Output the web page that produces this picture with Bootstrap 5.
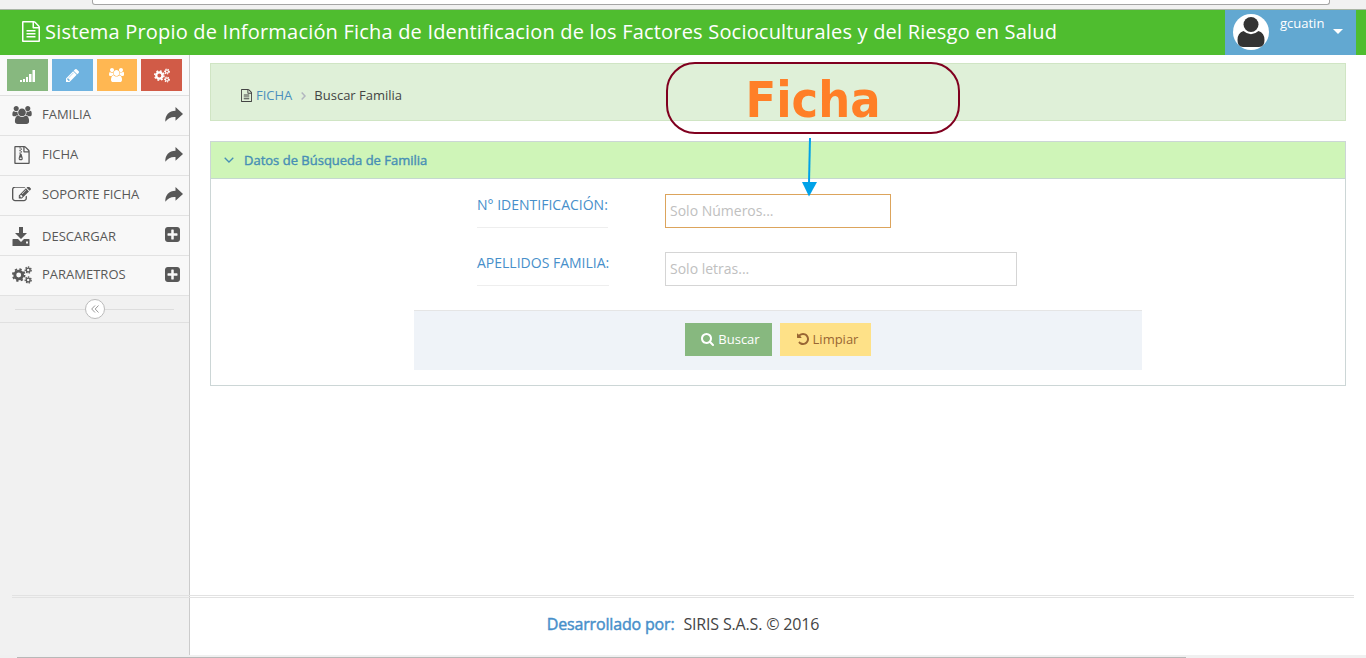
<!DOCTYPE html>
<html lang="es">
<head>
<meta charset="utf-8">
<meta name="viewport" content="width=device-width, initial-scale=1">
<title>Buscar Familia</title>
<link href="https://cdn.jsdelivr.net/npm/bootstrap@5.3.0/dist/css/bootstrap.min.css" rel="stylesheet">
<style>
body{font-family:"Open Sans",sans-serif;font-size:13px;line-height:20px;color:#444;background:#fff;height:658px;overflow:hidden}
svg{fill:currentColor;flex:none;display:block}
.chrome{height:10px;background:#f1f1f1;border-bottom:1px solid #a9b5a5;padding:0 36px 0 92px}
.chrome div{height:5px;background:#fff;border:1px solid #a5a5a5;border-top:0;border-radius:0 0 3px 3px}
.topbar{height:45px;background:#4fbd2f;padding:0 10px 0 22px}
.brand{color:#fff;font-size:20px;line-height:43px;gap:5px;white-space:nowrap;height:43px}
.brand span{letter-spacing:.193px}
.user{width:131px;background:#62a8d1;color:#fff;padding:4px 0 0 8px}
.avatar{width:36px;height:36px;background:#fff;color:#333}
.user span{margin:-1px 0 0 11px;height:20px;line-height:20px}
.main{height:600px}
.sidebar{width:190px;background:#f1f1f1;border-right:1px solid #ccc}
.shortcuts{height:41px;background:#fafafa;border-bottom:1px solid #e0e0e0;padding:4px 7px;gap:4px}
.shortcuts .btn{width:41px;height:32px;border:0;border-radius:0;color:#fff;padding:0}
.c1{background:#87b87f!important}.c2{background:#6fb3e0!important}.c3{background:#ffb752!important}.c4{background:#d15b47!important}
.item{height:40px;background:#f8f8f8;border-bottom:1px solid #e2e2e2;color:#585858;padding:0 6px 2px 12px}
.item .ico{width:30px}
.item .flex-grow-1{padding-bottom:2px}
.item .flex-grow-1.low{padding:2px 0 0}
.item .end{width:18px}
.collapser{height:27px;border-bottom:1px solid #e0e0e0;padding:0 15px}
.collapser i{height:1px;background:#ddd}
.collapser b{width:20px;height:20px;border:1px solid #bbb;background:#fff;color:#999;border-radius:50%}
.content{padding:8px 20px 0}
.crumbs{height:58px;background:#dff0d8;border:1px solid #d0e5c4;padding:6px 0 0 30px}
.blue{color:#4c8fbd}
.widget{margin-top:20px;height:245px;border:1px solid #ccd6d6}
.widget-head{height:37px;background:#cff5b8;border-bottom:1px solid #c5d8d0;padding-left:13px;color:#478fb5;-webkit-text-stroke:.4px #478fb5}
.fields{padding-left:266px}
.field-label{width:188px;font-size:14px;color:#478fca}
.field-label span{display:inline-block;height:34px;line-height:22px;border-bottom:1px solid #eee;white-space:nowrap}
.field{height:34px;padding:0 4px 2px;font-size:14px;border:1px solid #d5d5d5;border-radius:0;box-shadow:none}
.field::placeholder{color:#c0c0c0}
.actions{margin:24px 0 0 203px;width:728px;height:60px;background:#eff3f8;border-top:1px solid #e5e5e5;gap:8px;padding-bottom:2px}
.actions .btn{height:33px;border:0;border-radius:0;font-size:13px;line-height:20px;padding:0 0 1px 4px}
.footer-line{margin:0 12px;height:3px;border:solid #e2e2e2;border-width:1px 0;position:relative}
.foot{font-size:16px;letter-spacing:-.17px}
.foot .blue{-webkit-text-stroke:.45px #478fca;color:#478fca}
.note{left:666px;top:62px;width:294px;height:72px;border:2px solid #80001f;border-radius:29px;color:#ff7f27;font:bold 50px/72px "DejaVu Sans Condensed","DejaVu Sans",sans-serif;font-stretch:condensed;text-align:center}
.arrow{left:800px;top:138px}
.foot-wrap{left:0;right:0;top:595px}
.scroll{left:0;right:0;bottom:0;height:3px;background:#f0f0f0}
.scroll div{height:1px;margin:2px 180px 0 17px;background:#b8b8b8}
</style>
</head>
<body>
<svg width="0" height="0" class="position-absolute"><defs>
<symbol id="file" viewBox="0 0 1536 1792"><path d="M1468 380q28 28 48 76t20 88v1152q0 40-28 68t-68 28h-1344q-40 0-68-28t-28-68v-1600q0-40 28-68t68-28h896q40 0 88 20t76 48zm-444-244v376h376q-10-29-22-41l-313-313q-12-12-41-22zm384 1528v-1024h-416q-40 0-68-28t-28-68v-416h-768v1536h1280zm-1024-864q0-14 9-23t23-9h704q14 0 23 9t9 23v64q0 14-9 23t-23 9h-704q-14 0-23-9t-9-23v-64zm736 224q14 0 23 9t9 23v64q0 14-9 23t-23 9h-704q-14 0-23-9t-9-23v-64q0-14 9-23t23-9h704zm0 256q14 0 23 9t9 23v64q0 14-9 23t-23 9h-704q-14 0-23-9t-9-23v-64q0-14 9-23t23-9h704z"/></symbol>
<symbol id="zip" viewBox="0 0 1536 1792"><path d="M1468 380q28 28 48 76t20 88v1152q0 40-28 68t-68 28h-1344q-40 0-68-28t-28-68v-1600q0-40 28-68t68-28h896q40 0 88 20t76 48zm-444-244v376h376q-10-29-22-41l-313-313q-12-12-41-22zm384 1528v-1024h-416q-40 0-68-28t-28-68v-416h-768v1536h1280z"/><path d="M512 128h128v128H512zM640 256h128v128H640zM512 384h128v128H512zM640 512h128v128H640zM512 640h128v128H512z"/><path fill-rule="evenodd" d="M560 768h160l120 420q40 230-200 230t-200-230zM640 1150c-150 0-150 150 0 150s150-150 0-150z"/></symbol>
<symbol id="share" viewBox="0 0 18 16"><path d="M10.500 0L18 7l-7.500 6.700V10C6 9.700 3 11 .3 14.800C0 8 4 3.900 10.500 3.700z"/></symbol>
<symbol id="plus" viewBox="128 128 1536 1536"><path d="M1408 960v-128q0-26-19-45t-45-19h-320v-320q0-26-19-45t-45-19h-128q-26 0-45 19t-19 45v320h-320q-26 0-45 19t-19 45v128q0 26 19 45t45 19h320v320q0 26 19 45t45 19h128q26 0 45-19t19-45v-320h320q26 0 45-19t19-45zm256-544v960q0 119-84.500 203.500t-203.500 84.500h-960q-119 0-203.500-84.500t-84.500-203.500v-960q0-119 84.500-203.500t203.500-84.500h960q119 0 203.500 84.500t84.500 203.500z"/></symbol>
<symbol id="undo" viewBox="128 128 1536 1536"><path d="M1664 896q0 156-61 298t-164 245-245 164-298 61q-172 0-327-72.500t-264-204.500q-7-10-6.500-22.500t8.500-20.500l137-138q10-9 25-9 16 2 23 12 73 95 179 147t225 52q104 0 198.500-40.500t163.500-109.500 109.500-163.500 40.500-198.500-40.500-198.500-109.500-163.500-163.500-109.500-198.500-40.500q-98 0-188 35.500t-160 101.500l137 138q31 30 14 69-17 40-59 40h-448q-26 0-45-19t-19-45v-448q0-42 40-59 39-17 69 14l130 129q107-101 244.500-156.500t284.500-55.500q156 0 298 61t245 164 164 245 61 298z"/></symbol>
<symbol id="search" viewBox="64 128 1664 1664"><path d="M1216 832q0-185-131.500-316.500t-316.500-131.500-316.500 131.500-131.500 316.500 131.500 316.500 316.500 131.500 316.500-131.500 131.500-316.500zm512 832q0 52-38 90t-90 38q-54 0-90-38l-343-342q-179 124-399 124-143 0-273.500-55.500t-225-150-150-225-55.500-273.500 55.500-273.500 150-225 225-150 273.500-55.500 273.500 55.500 225 150 150 225 55.500 273.500q0 220-124 399l343 343q37 37 37 90z"/></symbol>
<symbol id="pencil" viewBox="128 149 1515 1515"><path d="M491 1536l91-91-235-235-91 91v107h128v128h107zm523-928q0-22-22-22-10 0-17 7l-542 542q-7 7-7 17 0 22 22 22 10 0 17-7l542-542q7-7 7-17zm-54-192l416 416-832 832h-416v-416zm683 96q0 53-37 90l-166 166-416-416 166-165q36-38 90-38 53 0 91 38l235 234q37 39 37 91z"/></symbol>
<symbol id="users" viewBox="64 0 1920 1792"><path d="M657 896q-162 5-265 128h-134q-82 0-138-40.500t-56-118.500q0-353 124-353 6 0 43.500 21t97.500 42.500 119 21.500q67 0 133-23-5 37-5 66 0 159 93 293zm1071 637q0 120-73 189.500t-194 69.500h-874q-121 0-194-69.500t-73-189.500q0-53 3.500-103.500t14-109 26.500-108.500 43-97.500 62-81 85.500-53.500 111.500-20q10 0 43 21.500t73 48 107 48 135 21.500 135-21.500 107-48 73-48 43-21.500q61 0 111.500 20t85.500 53.500 62 81 43 97.500 26.500 108.500 14 109 3.500 103.500zm-1024-1277q0 106-75 181t-181 75-181-75-75-181 75-181 181-75 181 75 75 181zm704 384q0 159-112.500 271.500t-271.500 112.500-271.500-112.500-112.500-271.500 112.500-271.500 271.500-112.500 271.500 112.500 112.500 271.500zm576 225q0 78-56 118.500t-138 40.500h-134q-103-123-265-128 93-134 93-293 0-29-5-66 66 23 133 23 59 0 119-21.500t97.500-42.500 43.500-21q124 0 124 353zm-128-609q0 106-75 181t-181 75-181-75-75-181 75-181 181-75 181 75 75 181z"/></symbol>
<symbol id="edit" viewBox="0 200 1792 1400"><path d="M888 1184l116-116-152-152-116 116v56h96v96h56zm440-720q-16-16-33 1l-350 350q-17 17-1 33t33-1l350-350q17-17 1-33zm80 594v190q0 119-84.500 203.500t-203.500 84.500h-832q-119 0-203.500-84.500t-84.500-203.500v-832q0-119 84.500-203.500t203.500-84.500h832q63 0 117 25 15 7 18 23 3 17-9 29l-49 49q-14 14-32 8-23-6-45-6h-832q-66 0-113 47t-47 113v832q0 66 47 113t113 47h832q66 0 113-47t47-113v-126q0-13 9-22l64-64q15-15 35-7t20 29zm-96-738l288 288-672 672h-288v-288zm444 132l-92 92-288-288 92-92q28-28 68-28t68 28l152 152q28 28 28 68t-28 68z"/></symbol>
<symbol id="cogs" viewBox="0 0 20 18"><g fill="none" stroke="currentColor"><circle cx="6.700" cy="9" r="3.900" stroke-width="2.900"/><circle cx="6.700" cy="9" r="5.800" stroke-width="1.900" stroke-dasharray="2.300 2.255"/><circle cx="16.200" cy="4" r="1.900" stroke-width="1.400"/><circle cx="16.200" cy="4" r="3" stroke-width="1.300" stroke-dasharray="1.500 1.193"/><circle cx="16.200" cy="14" r="1.900" stroke-width="1.400"/><circle cx="16.200" cy="14" r="3" stroke-width="1.300" stroke-dasharray="1.500 1.193"/></g></symbol>
</defs></svg>

<div class="chrome"><div></div></div>
<nav class="topbar d-flex justify-content-between">
  <div class="brand d-flex align-items-center"><svg width="18" height="21"><use href="#file"/></svg><span>Sistema Propio de Información Ficha de Identificacion de los Factores Socioculturales y del Riesgo en Salud</span></div>
  <div class="user d-flex">
    <div class="avatar rounded-circle"><svg width="36" height="36" viewBox="0 0 36 36"><circle cx="18" cy="10.500" r="7.500"/><path d="M10.500 17Q18 23.500 25.500 17Q31.500 19 31.500 26Q31.500 33 26 33H10Q4.500 33 4.500 26Q4.500 19 10.500 17Z"/></svg></div>
    <span>gcuatin</span>
    <svg width="10" height="5" style="margin:15px 0 0 9px" viewBox="0 0 10 5"><path d="M0 0h10L5 5z"/></svg>
  </div>
</nav>

<div class="main d-flex">
  <aside class="sidebar flex-shrink-0">
    <div class="shortcuts d-flex">
      <button class="btn c1 d-flex align-items-center justify-content-center"><svg width="15" height="13" viewBox="0 0 15 13"><path d="M0 11h2v2H0zM3 10h2v3H3zM6 8h2v5H6zM9 5h2.500v8H9zM12.500 1H15v12h-2.500z"/></svg></button>
      <button class="btn c2 d-flex align-items-center justify-content-center"><svg width="13" height="13"><use href="#pencil"/></svg></button>
      <button class="btn c3 d-flex align-items-center justify-content-center"><svg width="15" height="14"><use href="#users"/></svg></button>
      <button class="btn c4 d-flex align-items-center justify-content-center"><svg width="16" height="15"><use href="#cogs"/></svg></button>
    </div>
    <div class="item d-flex align-items-center"><div class="ico"><svg width="20" height="18"><use href="#users"/></svg></div><span class="flex-grow-1">FAMILIA</span><svg width="18" height="16"><use href="#share"/></svg></div>
    <div class="item d-flex align-items-center"><div class="ico"><svg width="20" height="18"><use href="#zip"/></svg></div><span class="flex-grow-1">FICHA</span><svg width="18" height="16"><use href="#share"/></svg></div>
    <div class="item d-flex align-items-center"><div class="ico"><svg width="19" height="15"><use href="#edit"/></svg></div><span class="flex-grow-1">SOPORTE FICHA</span><svg width="18" height="16"><use href="#share"/></svg></div>
    <div class="item d-flex align-items-center"><div class="ico pt-1"><svg width="18" height="19" viewBox="0 0 18 19"><path d="M7 0h4v6h4l-6 6-6-6h4z"/><path fill-rule="evenodd" d="M1 12h5l3 3 3-3h5q.5 0 .5.5V19H.5v-6.500q0-.5.500-.500zM14 14.500v2h2v-2z"/></svg></div><span class="flex-grow-1 low">DESCARGAR</span><div class="end"><svg width="15" height="15"><use href="#plus"/></svg></div></div>
    <div class="item d-flex align-items-center"><div class="ico"><svg width="20" height="18"><use href="#cogs"/></svg></div><span class="flex-grow-1">PARAMETROS</span><div class="end"><svg width="15" height="15"><use href="#plus"/></svg></div></div>
    <div class="collapser d-flex align-items-center"><i class="flex-grow-1"></i><b class="d-flex align-items-center justify-content-center"><svg width="8" height="8" viewBox="0 0 8 8"><path d="M4 .5L.7 4 4 7.500M7.500.5L4.200 4l3.300 3.500" fill="none" stroke="currentColor"/></svg></b><i class="flex-grow-1"></i></div>
  </aside>

  <main class="content flex-grow-1">
    <div class="crumbs d-flex align-items-center">
      <svg width="11" height="13"><use href="#file"/></svg><span class="blue" style="margin-left:4px">FICHA</span>
      <svg width="5" height="8" style="margin:1px 8px 0 9px" viewBox="0 0 5 8"><path d="M.7.5L4 4 .7 7.500" fill="none" stroke="#b2b6bf" stroke-width="1.500"/></svg>
      <span>Buscar Familia</span>
    </div>
    <section class="widget">
      <div class="widget-head d-flex align-items-center"><svg width="10" height="6" viewBox="0 0 10 6"><path d="M.7.7L5 5 9.300.7" fill="none" stroke="currentColor" stroke-width="1.300"/></svg><span style="margin-left:10px">Datos de Búsqueda de Familia</span></div>
      <div class="fields d-flex" style="padding-top:15px"><label class="field-label"><span>N° IDENTIFICACIÓN:</span></label><input class="form-control field" style="width:226px;border-color:#dca45c" placeholder="Solo Números..."></div>
      <div class="fields d-flex" style="padding-top:24px"><label class="field-label"><span>APELLIDOS FAMILIA:</span></label><input class="form-control field" style="width:352px" placeholder="Solo letras..."></div>
      <div class="actions d-flex justify-content-center align-items-center">
        <button class="btn c1 text-white d-flex align-items-center justify-content-center" style="width:87px;gap:4px"><svg width="13" height="13"><use href="#search"/></svg>Buscar</button>
        <button class="btn d-flex align-items-center justify-content-center" style="width:91px;gap:4px;background:#fee188;color:#963"><svg width="12" height="12"><use href="#undo"/></svg>Limpiar</button>
      </div>
    </section>
  </main>
</div>

<footer class="foot-wrap position-absolute"><div class="footer-line"></div>
  <div class="foot d-flex justify-content-center" style="padding-top:16px;gap:9px"><span class="blue">Desarrollado por:</span><span>SIRIS S.A.S. © 2016</span></div>
</footer>
<div class="scroll position-absolute d-flex flex-column"><div></div></div>
<div class="note position-absolute">Ficha</div>
<svg class="arrow position-absolute" width="20" height="59" viewBox="0 0 20 59"><path d="M10 0L9 45" stroke="#00a2e8" stroke-width="2"/><path d="M2 44h15L9 58.500z" fill="#00a2e8"/></svg>
</body>
</html>
